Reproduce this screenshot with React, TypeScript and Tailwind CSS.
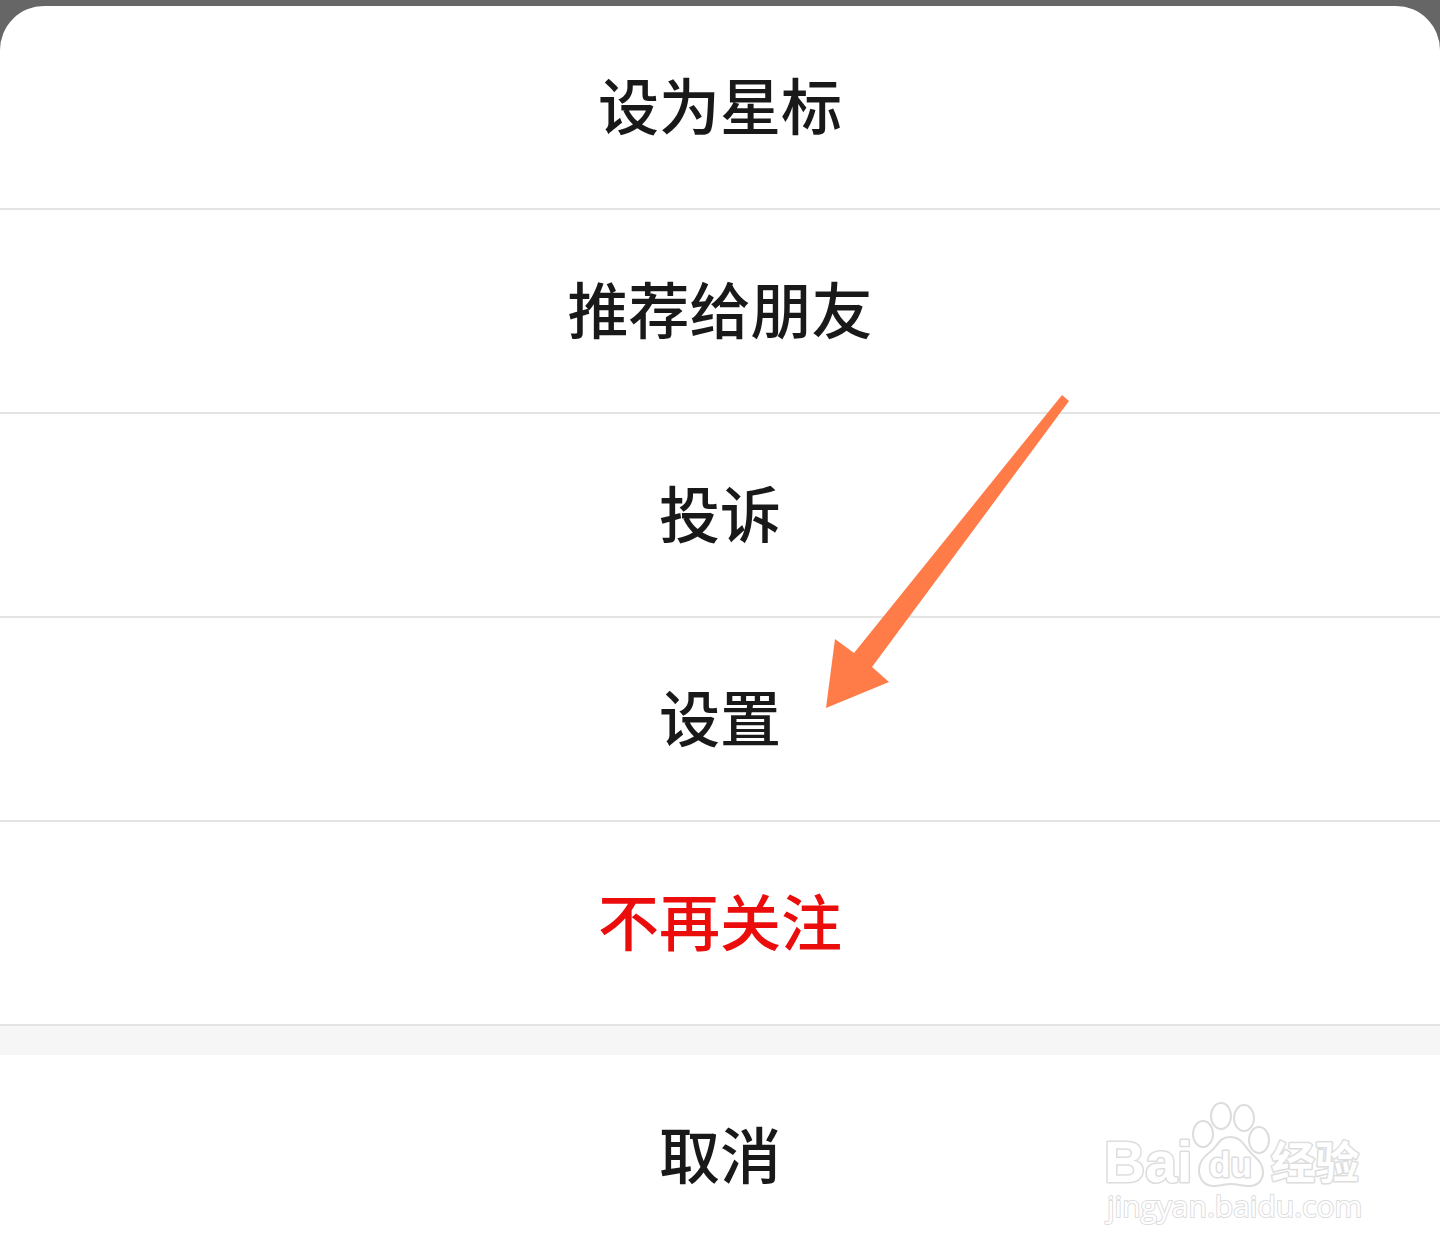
type Action = { label: string; danger?: boolean; pointed?: boolean };

const actions: Action[] = [
  { label: "设为星标" },
  { label: "推荐给朋友" },
  { label: "投诉" },
  { label: "设置", pointed: true },
  { label: "不再关注", danger: true },
];

function Arrow() {
  return (
    <svg
      className="pointer-events-none absolute left-1/2 -top-[223px] z-10 ml-[106px]"
      width="243"
      height="313"
      viewBox="0 0 243 313"
      aria-hidden="true"
    >
      <path d="M236 0L243 6L46 272L63 287L0 313L9 244L28 258Z" fill="#ff7b47" />
    </svg>
  );
}

function Watermark() {
  return (
    <svg
      className="pointer-events-none absolute bottom-[27px] right-[70px]"
      width="270"
      height="130"
      viewBox="0 0 270 130"
      role="img"
      aria-label="Baidu 经验 jingyan.baidu.com"
      fill="#ffffff"
      stroke="#dddddd"
      strokeWidth="2"
      strokeLinejoin="round"
    >
      <g paintOrder="stroke" strokeWidth="3" fontWeight="700">
        <text x="4" y="82" fontSize="57" fontFamily="Liberation Sans, sans-serif">Bai</text>
        <text x="171" y="79" fontSize="44" fontFamily="Noto Sans CJK SC, sans-serif">经验</text>
        <text x="7" y="117" fontSize="30" fontWeight="400" strokeWidth="2" fontFamily="Open Sans, sans-serif">jingyan.baidu.com</text>
      </g>
      <ellipse cx="103" cy="34" rx="10" ry="13" />
      <ellipse cx="121" cy="16" rx="10" ry="13" />
      <ellipse cx="144" cy="18" rx="10" ry="13" />
      <ellipse cx="159" cy="40" rx="10" ry="13" />
      <path d="M130 37C119 37 118 46 110 52C103 57 99 62 99 70C99 80 105 86 114 86C121 86 124 84 131 84C138 84 141 86 149 86C158 86 163 80 163 72C163 63 157 59 151 53C144 46 142 37 130 37Z" />
      <text x="109" y="77" fontSize="35" fontWeight="700" strokeWidth="3" paintOrder="stroke" fontFamily="Liberation Sans, sans-serif">du</text>
    </svg>
  );
}

export default function App() {
  return (
    <div className="bg-[#666666] pt-1.5 font-['Noto_Sans_CJK_SC',sans-serif] text-[61px] font-medium leading-[196px] text-[#191919]">
      <main className="relative overflow-hidden rounded-t-[44px] bg-white">
        <ul>
          {actions.map((action) => (
            <li key={action.label} className="relative border-b-2 border-[#e4e4e4]">
              <button
                type="button"
                className={`block w-full pb-1.5 text-center ${action.danger ? "text-[#eb0c0c]" : ""}`}
              >
                {action.label}
              </button>
              {action.pointed && <Arrow />}
            </li>
          ))}
        </ul>
        <div className="h-[29px] bg-[#f6f6f6]" />
        <button type="button" className="block w-full pb-1.5 text-center">
          取消
        </button>
        <Watermark />
      </main>
    </div>
  );
}
